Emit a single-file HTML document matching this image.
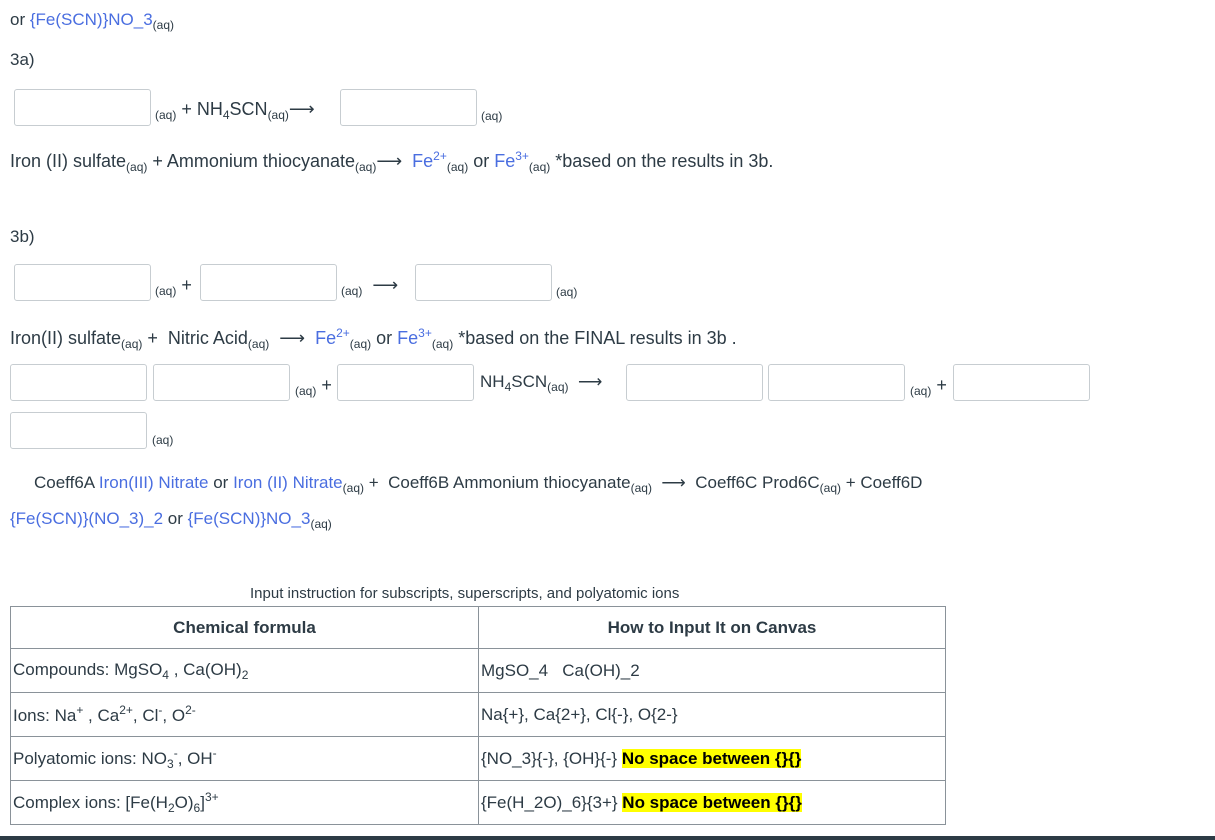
<!DOCTYPE html>
<html><head><meta charset="utf-8"><style>
body{margin:0;width:1215px;height:840px;overflow:hidden;background:#fff;font-family:"Liberation Sans",sans-serif;color:#2d3b45;font-size:18px;position:relative}
.a{position:absolute;white-space:nowrap}
.b{position:absolute;border:1px solid #c7cdd1;border-radius:3px;background:#fff;width:137px;height:37px;box-sizing:border-box}
.aq{font-size:12px;vertical-align:-4px}
.s{font-size:12px;vertical-align:7px}
.sb{font-size:12px;vertical-align:-4px}
.bl{color:#4a6ee0}
table{position:absolute;left:10px;top:606px;width:936px;border-collapse:collapse;font-size:17px}
td,th{border:1px solid #8a9299;height:43px;padding:0 2px;text-align:left}
th{text-align:center;font-weight:bold;color:#2d3b45;height:41px}
.hl{background:#ffff00;font-weight:bold;color:#000}
</style></head><body>
<div class="a" style="left:10px;top:10px;font-size:17px">or <span class="bl">{Fe(SCN)}NO_3</span><span class="aq">(aq)</span></div>
<div class="a" style="left:10px;top:50px;font-size:17px">3a)</div>

<div class="b" style="left:14px;top:89px"></div>
<div class="a" style="left:155px;top:99px"><span class="aq">(aq)</span> + NH<span class="sb">4</span>SCN<span class="aq">(aq)</span>⟶</div>
<div class="b" style="left:340px;top:89px"></div>
<div class="a" style="left:481px;top:100px"><span class="aq">(aq)</span></div>

<div class="a" style="left:10px;top:149px">Iron (II) sulfate<span class="aq">(aq)</span> + Ammonium thiocyanate<span class="aq">(aq)</span>⟶ &nbsp;<span class="bl">Fe<span class="s">2+</span></span><span class="aq">(aq)</span> or <span class="bl">Fe<span class="s">3+</span></span><span class="aq">(aq)</span> *based on the results in 3b.</div>

<div class="a" style="left:10px;top:227px;font-size:17px">3b)</div>
<div class="b" style="left:14px;top:264px"></div>
<div class="a" style="left:155px;top:275px"><span class="aq">(aq)</span> +</div>
<div class="b" style="left:200px;top:264px"></div>
<div class="a" style="left:341px;top:275px"><span class="aq">(aq)</span> &nbsp;⟶</div>
<div class="b" style="left:415px;top:264px"></div>
<div class="a" style="left:556px;top:276px"><span class="aq">(aq)</span></div>

<div class="a" style="left:10px;top:326px">Iron(II) sulfate<span class="aq">(aq)</span> + &nbsp;Nitric Acid<span class="aq">(aq)</span> &nbsp;⟶ &nbsp;<span class="bl">Fe<span class="s">2+</span></span><span class="aq">(aq)</span> or <span class="bl">Fe<span class="s">3+</span></span><span class="aq">(aq)</span> *based on the FINAL results in 3b .</div>

<div class="b" style="left:10px;top:364px"></div>
<div class="b" style="left:153px;top:364px"></div>
<div class="a" style="left:295px;top:375px"><span class="aq">(aq)</span> +</div>
<div class="b" style="left:337px;top:364px"></div>
<div class="a" style="left:480px;top:372px;font-size:17px">NH<span class="sb">4</span>SCN<span class="aq">(aq)</span> &nbsp;⟶</div>
<div class="b" style="left:626px;top:364px"></div>
<div class="b" style="left:768px;top:364px"></div>
<div class="a" style="left:910px;top:375px"><span class="aq">(aq)</span> +</div>
<div class="b" style="left:953px;top:364px"></div>
<div class="b" style="left:10px;top:412px"></div>
<div class="a" style="left:152px;top:424px"><span class="aq">(aq)</span></div>

<div class="a" style="left:34px;top:473px;font-size:17px">Coeff6A <span class="bl">Iron(III) Nitrate</span> or <span class="bl">Iron (II) Nitrate</span><span class="aq">(aq)</span> + &nbsp;Coeff6B Ammonium thiocyanate<span class="aq">(aq)</span> &nbsp;⟶ &nbsp;Coeff6C Prod6C<span class="aq">(aq)</span> + Coeff6D</div>
<div class="a" style="left:10px;top:509px;font-size:17px"><span class="bl">{Fe(SCN)}(NO_3)_2</span> or <span class="bl">{Fe(SCN)}NO_3</span><span class="aq">(aq)</span></div>

<div class="a" style="left:250px;top:585px;font-size:15px">Input instruction for subscripts, superscripts, and polyatomic ions</div>
<table>
<tr><th style="width:463px">Chemical formula</th><th>How to Input It on Canvas</th></tr>
<tr><td>Compounds: MgSO<span class="sb">4</span> , Ca(OH)<span class="sb">2</span></td><td>MgSO_4 &nbsp;&nbsp;Ca(OH)_2</td></tr>
<tr><td>Ions: Na<span class="s">+</span> , Ca<span class="s">2+</span>, Cl<span class="s">-</span>, O<span class="s">2-</span></td><td>Na{+}, Ca{2+}, Cl{-}, O{2-}</td></tr>
<tr><td>Polyatomic ions: NO<span class="sb">3</span><span class="s">-</span>, OH<span class="s">-</span></td><td>{NO_3}{-}, {OH}{-} <span class="hl">No space between {}{}</span></td></tr>
<tr><td>Complex ions: [Fe(H<span class="sb">2</span>O)<span class="sb">6</span>]<span class="s">3+</span></td><td>{Fe(H_2O)_6}{3+} <span class="hl">No space between {}{}</span></td></tr>
</table>
<div class="a" style="left:0;top:836px;width:1215px;height:4px;background:#2d3b45"></div>
</body></html>
